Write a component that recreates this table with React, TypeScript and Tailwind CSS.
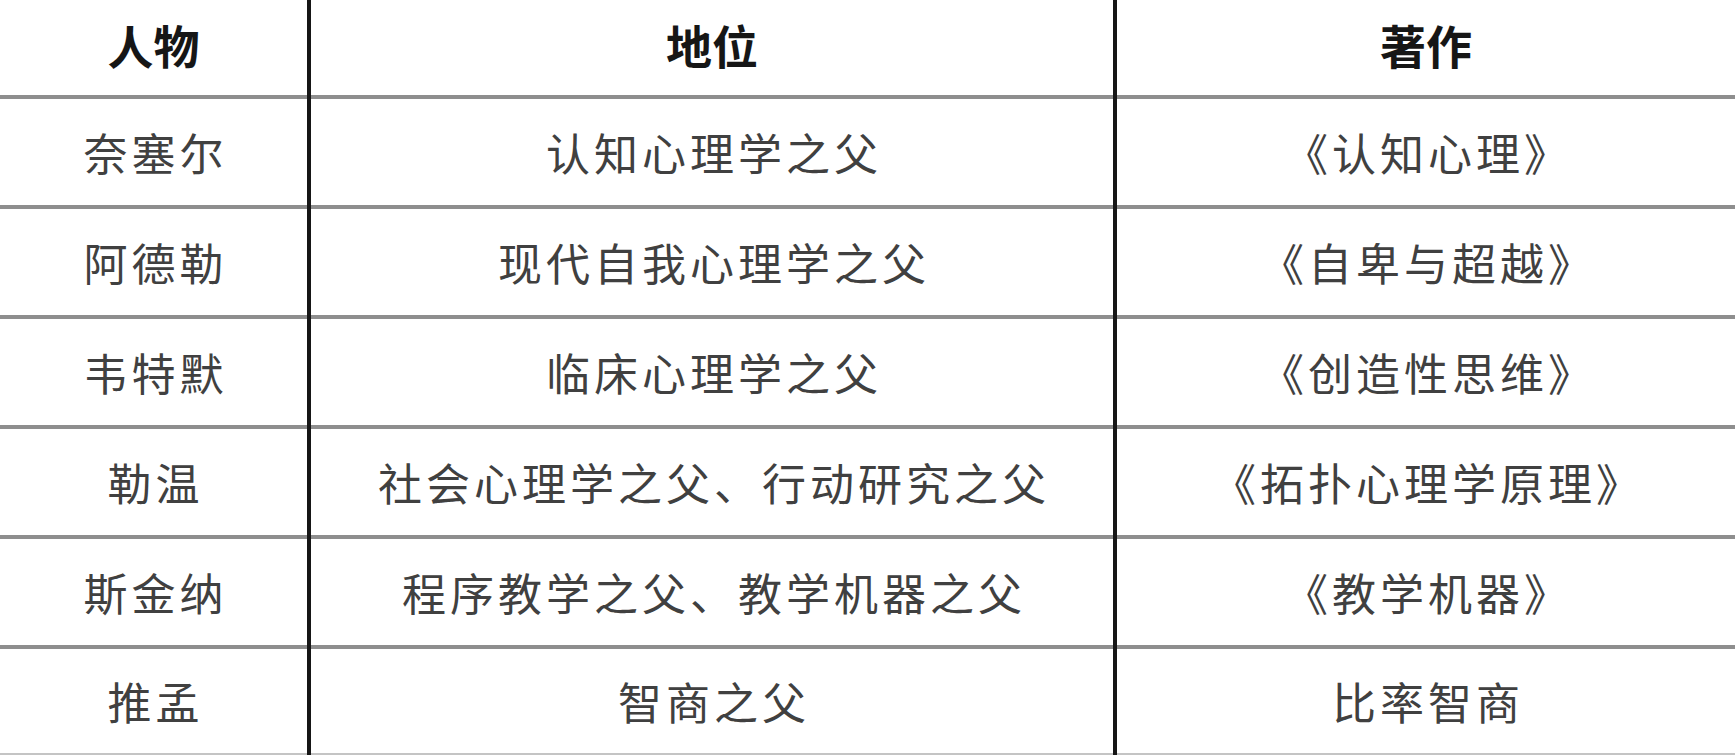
const rows = [
  ["奈塞尔", "认知心理学之父", "《认知心理》"],
  ["阿德勒", "现代自我心理学之父", "《自卑与超越》"],
  ["韦特默", "临床心理学之父", "《创造性思维》"],
  ["勒温", "社会心理学之父、行动研究之父", "《拓扑心理学原理》"],
  ["斯金纳", "程序教学之父、教学机器之父", "《教学机器》"],
  ["推孟", "智商之父", "比率智商"],
];

const headers = ["人物", "地位", "著作"];

const Column = ({ index }: { index: number }) => {
  return (
    <div className="flex flex-col">
      <div className="h-[99px] box-border border-b-4 border-[#8e8e8e] flex items-center justify-center pb-[8px]">
        <span className="text-[46px] font-bold text-[#161616] leading-none">{headers[index]}</span>
      </div>
      {rows.map((row, i) => (
        <div
          key={i}
          className={
            i === rows.length - 1
              ? "h-[106px] box-border border-b-2 border-[#c4c4c4] flex items-center justify-center"
              : "h-[110px] box-border border-b-4 border-[#8e8e8e] flex items-center justify-center"
          }
        >
          <span className="text-[44px] tracking-[4px] text-[#404040] leading-none pl-[4px]">{row[index]}</span>
        </div>
      ))}
    </div>
  );
};

const App = () => {
  return (
    <div
      className="w-[1735px] h-[755px] bg-white overflow-hidden flex"
      style={{ fontFamily: '"Noto Sans CJK SC", "Noto Sans", sans-serif' }}
    >
      <div className="w-[311px] shrink-0 box-border border-r-[4px] border-[#161616]">
        <Column index={0} />
      </div>
      <div className="w-[806px] shrink-0 box-border border-r-[4px] border-[#161616]">
        <Column index={1} />
      </div>
      <div className="flex-1">
        <Column index={2} />
      </div>
    </div>
  );
};

export default App;
